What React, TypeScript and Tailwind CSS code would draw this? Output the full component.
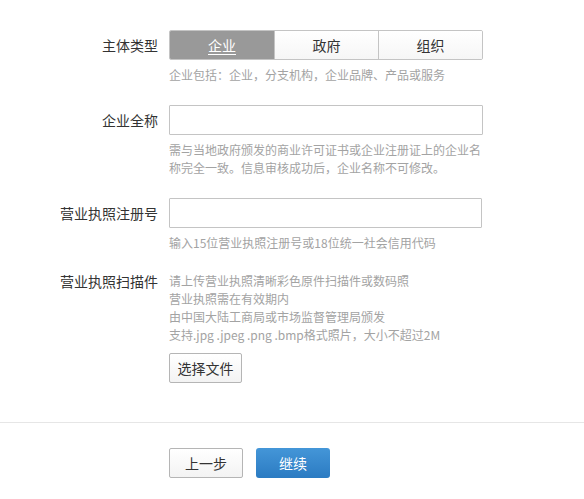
import React from "react";

const font = { fontFamily: '"Microsoft YaHei", "Noto Sans CJK SC", "Noto Sans", sans-serif' };

function Label({ children }: { children: React.ReactNode }) {
  return (
    <div className="w-[158px] shrink-0 text-right text-[14px] leading-[30px] text-[#333]">{children}</div>
  );
}

export default function App() {
  return (
    <div className="w-[584px] h-[499px] bg-white pt-[30px] overflow-hidden" style={font}>
      {/* Row 1 */}
      <div className="flex gap-[11px] mb-[21px]">
        <Label>主体类型</Label>
        <div>
          <div className="flex w-[314px] h-[30px] border border-[#c4c4c4] rounded-[2px] overflow-hidden text-[14px]">
            <div className="w-[104px] flex items-center justify-center bg-[#999] text-white underline underline-offset-[3px]">企业</div>
            <div className="w-[104px] flex items-center justify-center bg-gradient-to-b from-white to-[#f6f6f6] text-[#333] border-l border-[#c4c4c4]">政府</div>
            <div className="flex-1 flex items-center justify-center bg-gradient-to-b from-white to-[#f6f6f6] text-[#333] border-l border-[#c4c4c4]">组织</div>
          </div>
          <div className="mt-[6px] text-[12px] leading-[18px] text-[#a3a3a3]">企业包括：企业，分支机构，企业品牌、产品或服务</div>
        </div>
      </div>

      {/* Row 2 */}
      <div className="flex gap-[11px] mb-[21px]">
        <Label>企业全称</Label>
        <div className="w-[314px]">
          <input className="block w-[314px] h-[30px] border border-[#c4c4c4] rounded-[1px] outline-none px-2 text-[14px]" />
          <div className="mt-[6px] text-[12px] leading-[18px] text-[#a3a3a3]">需与当地政府颁发的商业许可证书或企业注册证上的企业名称完全一致。信息审核成功后，企业名称不可修改。</div>
        </div>
      </div>

      {/* Row 3 */}
      <div className="flex gap-[11px] mb-[20px]">
        <Label>营业执照注册号</Label>
        <div className="w-[314px]">
          <input className="block w-[313px] h-[30px] border border-[#c4c4c4] rounded-[1px] outline-none px-2 text-[14px]" />
          <div className="mt-[6px] text-[12px] leading-[18px] text-[#a3a3a3]">输入15位营业执照注册号或18位统一社会信用代码</div>
        </div>
      </div>

      {/* Row 4 */}
      <div className="flex gap-[11px]">
        <div className="w-[158px] shrink-0 text-right text-[14px] leading-[18px] text-[#333]">营业执照扫描件</div>
        <div className="w-[314px]">
          <div className="text-[12px] leading-[18px] text-[#a3a3a3]">
            <div>请上传营业执照清晰彩色原件扫描件或数码照</div>
            <div>营业执照需在有效期内</div>
            <div>由中国大陆工商局或市场监督管理局颁发</div>
            <div>支持.jpg .jpeg .png .bmp格式照片，大小不超过2M</div>
          </div>
          <button className="mt-[9px] h-[30px] w-[73px] border border-[#b5b5b5] rounded-[2px] bg-gradient-to-b from-white to-[#f3f3f3] text-[14px] text-[#333] flex items-center justify-center">选择文件</button>
        </div>
      </div>

      {/* Divider */}
      <div className="mt-[39px] h-px bg-[#e6e6e6]" />

      {/* Footer buttons */}
      <div className="mt-[25px] flex gap-[13px] pl-[169px]">
        <button className="h-[30px] w-[74px] border border-[#b5b5b5] rounded-[2px] bg-gradient-to-b from-white to-[#f3f3f3] text-[14px] text-[#333] flex items-center justify-center">上一步</button>
        <button className="h-[30px] w-[74px] rounded-[3px] bg-gradient-to-b from-[#4496d8] to-[#2b7bc2] text-[14px] text-white flex items-center justify-center">继续</button>
      </div>
    </div>
  );
}
